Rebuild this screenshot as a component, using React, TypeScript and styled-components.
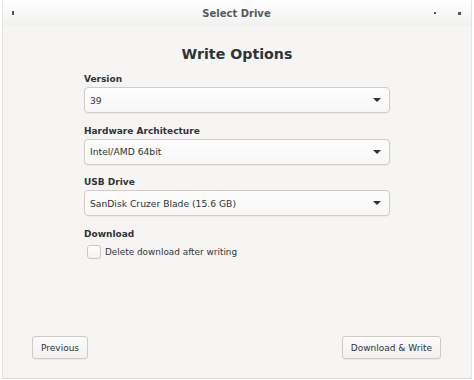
import React from "react"
import styled, { createGlobalStyle } from "styled-components"

const GlobalStyle = createGlobalStyle`
  html, body {
    margin: 0;
    padding: 0;
    background: #ffffff;
  }
  body {
    font-family: "DejaVu Sans", "Liberation Sans", sans-serif;
    color: #2e3436;
  }
`

const Frame = styled.div`
  width: 474px;
  height: 380px;
  box-sizing: border-box;
  padding: 0 2px 2px 2px;
  background: #ffffff;
`

const Window = styled.div`
  height: 100%;
  display: flex;
  flex-direction: column;
  background: #f6f5f4;
  border-left: 1px solid #e6e3e0;
  border-right: 1px solid #e6e3e0;
  border-bottom: 1px solid #dcd8d4;
`

const TitleBar = styled.div`
  height: 26px;
  display: grid;
  grid-template-columns: 1fr auto 1fr;
  align-items: center;
  padding: 0 10px 0 9px;
  background: linear-gradient(#ffffff, #f2f1f0);
`

const Title = styled.div`
  font-size: 10px;
  font-weight: bold;
  color: #555a5e;
`

const Dot = styled.div<{ $w: number; $h: number }>`
  width: ${p => p.$w}px;
  height: ${p => p.$h}px;
  background: #555;
`

const WinButtons = styled.div`
  display: flex;
  justify-content: flex-end;
  gap: 22px;
  align-items: center;
`

const Content = styled.div`
  flex: 1;
  display: flex;
  flex-direction: column;
  padding: 20px 81px 0 81px;
`

const Heading = styled.h1`
  margin: 0 0 12px 0;
  text-align: center;
  font-size: 14.2px;
  font-weight: bold;
  color: #2e3436;
`

const Label = styled.div`
  font-size: 9px;
  font-weight: bold;
  margin-bottom: 3px;
  color: #2e3436;
`

const Field = styled.div`
  margin-bottom: 12.5px;
`

const Combo = styled.div`
  height: 26px;
  box-sizing: border-box;
  display: flex;
  align-items: center;
  justify-content: space-between;
  padding: 0 8px 0 5px;
  font-size: 9.2px;
  color: #2e3436;
  background: linear-gradient(#fdfdfd, #f8f7f6);
  border: 1px solid #d2ccc7;
  border-radius: 4px;
  box-shadow: 0 1px 1px rgba(0, 0, 0, 0.04);
`

const Arrow = styled.div`
  width: 0;
  height: 0;
  border-left: 4px solid transparent;
  border-right: 4px solid transparent;
  border-top: 4px solid #2e3436;
`

const CheckRow = styled.div`
  display: flex;
  align-items: center;
  gap: 4px;
  padding-left: 3px;
  margin-top: 3px;
  font-size: 8.9px;
`

const CheckBox = styled.div`
  width: 14px;
  height: 14px;
  box-sizing: border-box;
  border: 1px solid #cdc7c2;
  border-radius: 3px;
  background: linear-gradient(#fdfdfd, #f4f3f2);
`

const Footer = styled.div`
  display: flex;
  justify-content: space-between;
  padding: 0 30px 19px 29px;
`

const Button = styled.div`
  height: 23px;
  box-sizing: border-box;
  display: flex;
  align-items: center;
  padding: 0 8px;
  font-size: 9px;
  color: #2e3436;
  background: linear-gradient(#fbfbfb, #f2f1f0);
  border: 1px solid #d0cac5;
  border-radius: 3px;
  box-shadow: 0 1px 1px rgba(0, 0, 0, 0.05);
`

const fields = [
  { label: "Version", value: "39" },
  { label: "Hardware Architecture", value: "Intel/AMD 64bit" },
  { label: "USB Drive", value: "SanDisk Cruzer Blade (15.6 GB)" },
]

const App = () => {
  return (
    <Frame>
      <GlobalStyle />
      <Window>
        <TitleBar>
          <Dot $w={2} $h={4} />
          <Title>Select Drive</Title>
          <WinButtons>
            <Dot $w={2} $h={2} />
            <Dot $w={3} $h={3} />
          </WinButtons>
        </TitleBar>
        <Content>
          <Heading>Write Options</Heading>
          {fields.map(f => (
            <Field key={f.label}>
              <Label>{f.label}</Label>
              <Combo>
                <span>{f.value}</span>
                <Arrow />
              </Combo>
            </Field>
          ))}
          <Label>Download</Label>
          <CheckRow>
            <CheckBox />
            <span>Delete download after writing</span>
          </CheckRow>
        </Content>
        <Footer>
          <Button>Previous</Button>
          <Button>Download &amp; Write</Button>
        </Footer>
      </Window>
    </Frame>
  )
}

export default App
